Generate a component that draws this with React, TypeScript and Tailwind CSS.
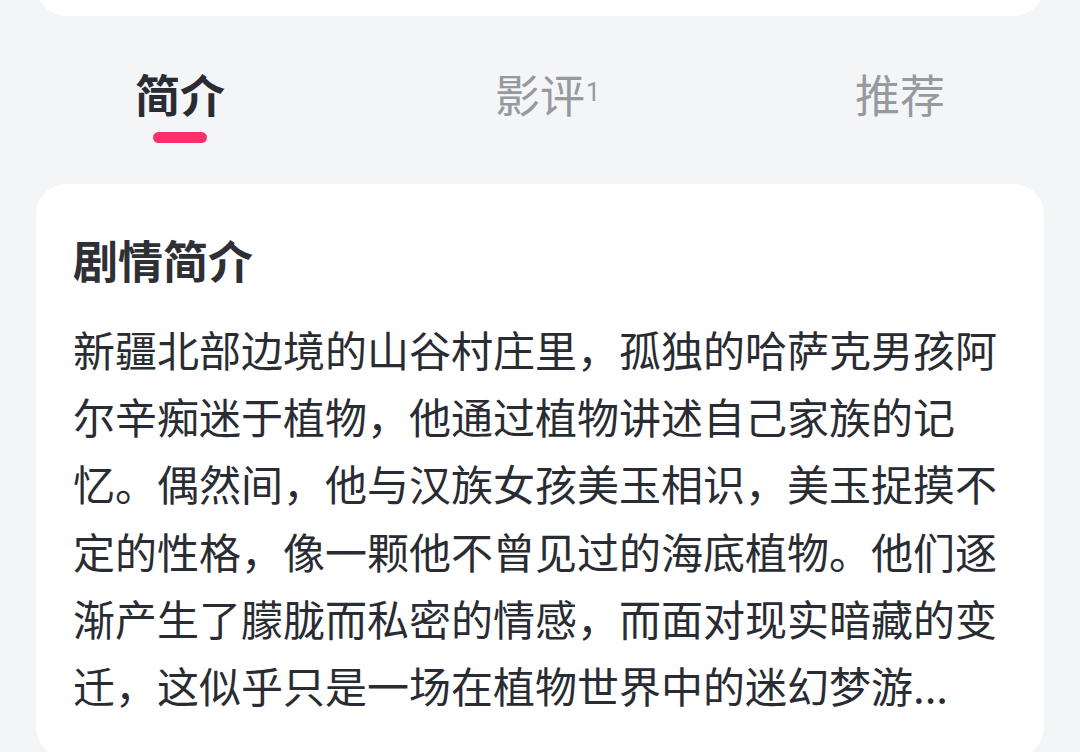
import React from "react";

const FONT = { fontFamily: '"Noto Sans CJK SC", "Noto Sans", sans-serif' };

export default function App() {
  const tabs = [
    { label: "简介", active: true, badge: "" },
    { label: "影评", active: false, badge: "1" },
    { label: "推荐", active: false, badge: "" },
  ];
  return (
    <div
      className="w-[1080px] h-[752px] overflow-hidden bg-[#f4f5f7] flex flex-col"
      style={FONT}
    >
      {/* top card remnant */}
      <div className="h-4 shrink-0 overflow-hidden flex flex-col justify-end px-[36px]">
        <div className="h-[60px] shrink-0 bg-white rounded-[30px]" />
      </div>

      {/* tabs */}
      <div className="grid grid-cols-3 mt-[48px] shrink-0">
        {tabs.map((t) => (
          <div key={t.label} className="flex flex-col items-center">
            <div className="relative">
              <span
                className={
                  "block text-[45px] leading-[60px] " +
                  (t.active ? "font-bold text-[#2a2c33]" : "text-[#97999f]")
                }
              >
                {t.label}
              </span>
              {t.badge && (
                <span className="absolute left-full top-[16px] ml-[1px] text-[25px] leading-[25px] text-[#97999f] font-['Roboto',sans-serif]">
                  {t.badge}
                </span>
              )}
            </div>
            <div
              className={
                "mt-[8px] h-[11px] w-[54px] rounded-full " +
                (t.active ? "bg-[#ff2e6c]" : "bg-transparent")
              }
            />
          </div>
        ))}
      </div>

      {/* synopsis card */}
      <div className="mx-[36px] mt-[41px] shrink-0 bg-white rounded-[30px] px-[37px] pt-[46px] pb-[39px]">
        <div className="text-[45px] leading-[60px] font-bold text-[#2e3036]">
          剧情简介
        </div>
        <p className="mt-[25px] text-[42px] leading-[67.2px] text-[#2a2c33]">
          新疆北部边境的山谷村庄里，孤独的哈萨克男孩阿尔辛痴迷于植物，他通过植物讲述自己家族的记忆。偶然间，他与汉族女孩美玉相识，美玉捉摸不定的性格，像一颗他不曾见过的海底植物。他们逐渐产生了朦胧而私密的情感，而面对现实暗藏的变迁，这似乎只是一场在植物世界中的迷幻梦游...
        </p>
      </div>
    </div>
  );
}
